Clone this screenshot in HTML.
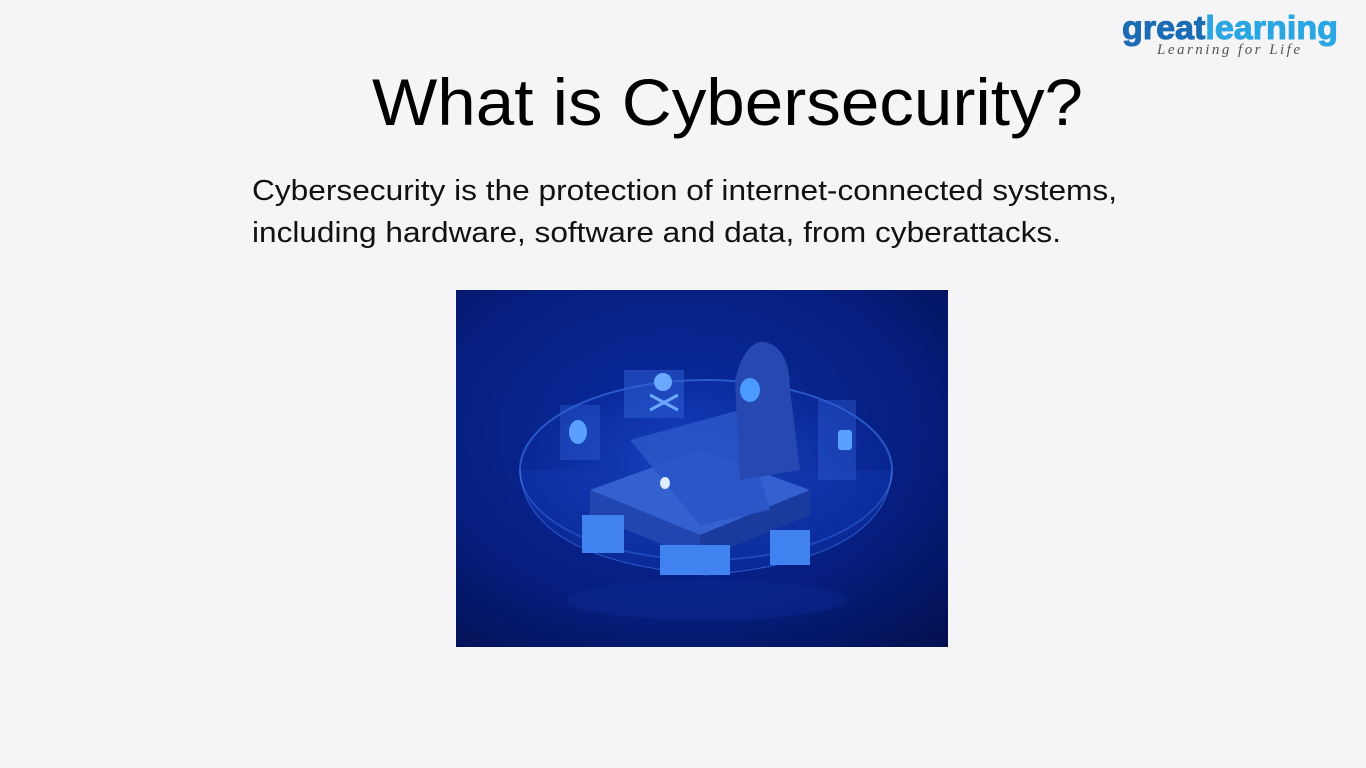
<!DOCTYPE html>
<html><head><meta charset="utf-8"><style>
html,body{margin:0;padding:0;background:#f5f4f7;}
svg{display:block}
</style></head><body>
<svg width="1366" height="768" viewBox="0 0 1366 768" xmlns="http://www.w3.org/2000/svg">
<defs>
<radialGradient id="bg" cx="0.45" cy="0.4" r="0.8">
<stop offset="0" stop-color="#0a2ca0"/><stop offset="0.6" stop-color="#061e80"/><stop offset="1" stop-color="#031050"/>
</radialGradient>
<radialGradient id="glow" cx="0.5" cy="0.5" r="0.5">
<stop offset="0" stop-color="#2f6cf0" stop-opacity="0.45"/><stop offset="1" stop-color="#1a4bdc" stop-opacity="0.12"/>
</radialGradient>
</defs>
<rect width="1366" height="768" fill="#f5f4f7"/>
<text x="1122" y="39" font-family="Liberation Sans, sans-serif" font-weight="bold" font-size="33" textLength="216" lengthAdjust="spacingAndGlyphs" stroke-width="1"><tspan fill="#1b6cb5" stroke="#1b6cb5">great</tspan><tspan fill="#2aa7e2" stroke="#2aa7e2">learning</tspan></text>
<text x="1157" y="54" font-family="Liberation Serif, serif" font-style="italic" font-size="15" fill="#555" textLength="143" lengthAdjust="spacing">Learning for Life</text>
<text x="372" y="125" font-family="Liberation Sans, sans-serif" font-size="66" fill="#000" textLength="711" lengthAdjust="spacingAndGlyphs">What is Cybersecurity?</text>
<text x="252" y="200" font-family="Liberation Sans, sans-serif" font-size="29" fill="#111" textLength="865" lengthAdjust="spacingAndGlyphs">Cybersecurity is the protection of internet-connected systems,</text>
<text x="252" y="242" font-family="Liberation Sans, sans-serif" font-size="29" fill="#111" textLength="809" lengthAdjust="spacingAndGlyphs">including hardware, software and data, from cyberattacks.</text>
<g>
<rect x="456" y="290" width="492" height="357" fill="url(#bg)"/>
<ellipse cx="706" cy="470" rx="186" ry="90" fill="url(#glow)" stroke="#4a8cff" stroke-width="2" stroke-opacity="0.5"/>
<path d="M520 470 Q525 560 706 575 Q887 560 892 470" fill="#1238b0" fill-opacity="0.45" stroke="#4f90ff" stroke-opacity="0.5"/>
<ellipse cx="706" cy="600" rx="140" ry="20" fill="#0a2890" opacity="0.5"/>
<polygon points="590,490 700,450 810,490 700,535" fill="#3460d0"/>
<polygon points="590,490 700,535 700,560 590,515" fill="#2246b0"/>
<polygon points="810,490 700,535 700,560 810,515" fill="#1a3a9e"/>
<polygon points="630,440 740,410 770,510 700,525" fill="#2a55c6" opacity="0.9"/>
<ellipse cx="665" cy="483" rx="5" ry="6" fill="#e0ecff"/>
<path d="M735 380 Q745 340 765 342 Q790 348 790 390 L800 470 L740 480 Z" fill="#2648b0"/>
<ellipse cx="750" cy="390" rx="10" ry="12" fill="#4a9aff"/>
<rect x="624" y="370" width="60" height="48" fill="#2f62d8" opacity="0.5"/>
<circle cx="663" cy="382" r="9" fill="#6aa8ff"/>
<path d="M650 395 L678 410 M678 395 L650 410" stroke="#6aa8ff" stroke-width="3"/>
<rect x="560" y="405" width="40" height="55" fill="#2f62d8" opacity="0.4"/>
<ellipse cx="578" cy="432" rx="9" ry="12" fill="#5aa0ff"/>
<rect x="818" y="400" width="38" height="80" fill="#2f62d8" opacity="0.4"/>
<rect x="838" y="430" width="14" height="20" rx="3" fill="#5aa0ff"/>
<rect x="582" y="515" width="42" height="38" fill="#3f82f0"/>
<rect x="660" y="545" width="70" height="30" fill="#3f82f0"/>
<rect x="770" y="530" width="40" height="35" fill="#3f82f0"/>
</g>
</svg>
</body></html>
